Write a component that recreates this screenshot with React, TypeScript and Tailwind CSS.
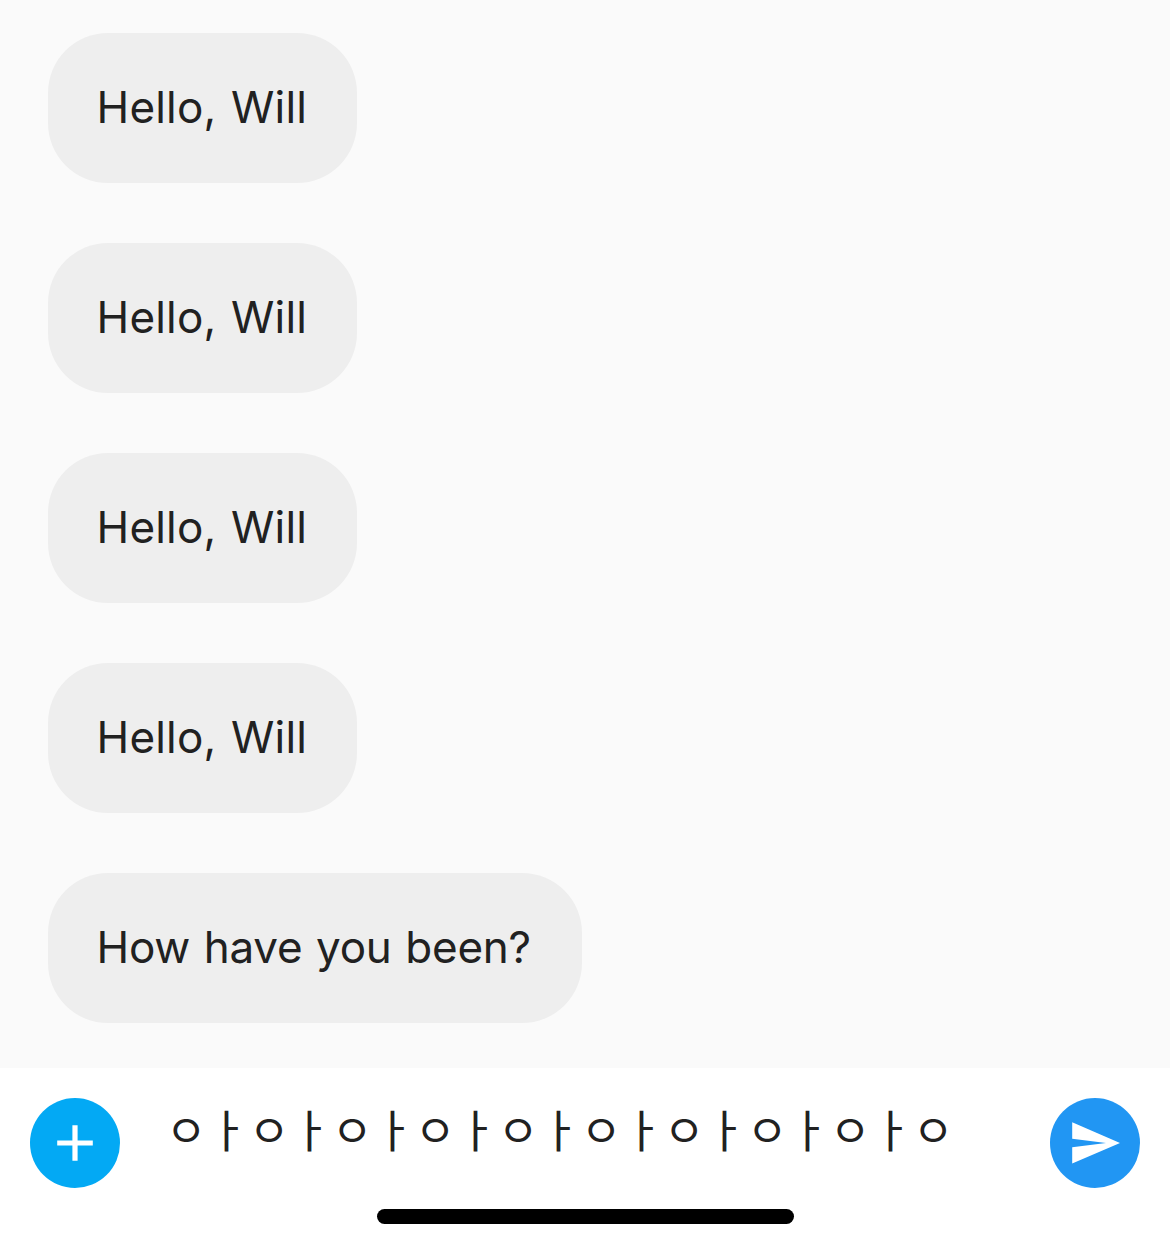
const greeting = { text: 'Hello, Will', style: 'w-[309px] tracking-[0.2px] [word-spacing:2px]' };

const messages = [
  greeting,
  greeting,
  greeting,
  greeting,
  { text: 'How have you been?', style: 'w-[534px] tracking-[-0.25px] [word-spacing:1.6px]' },
];

export default function App() {
  return (
    <div className="flex h-[1248px] w-[1170px] flex-col overflow-hidden bg-[#fafafa] font-['Inter',sans-serif] text-[#212121]">
      <main className="flex h-[1068px] shrink-0 flex-col items-start gap-[60px] px-12 pt-[33px]">
        {messages.map((m, i) => (
          <div
            key={i}
            className={`flex h-[150px] shrink-0 items-center rounded-[60px] bg-[#eeeeee] pb-0.5 pl-[48.5px] text-[44px] leading-[54px] whitespace-nowrap ${m.style}`}
          >
            {m.text}
          </div>
        ))}
      </main>
      <footer className="flex h-[180px] shrink-0 flex-col items-center bg-white">
        <div className="flex h-[141px] w-full items-start px-[30px] pt-[30px]">
          <button className="size-[90px] shrink-0 rounded-full bg-[#03a9f4]" aria-label="Add">
            <svg viewBox="0 0 90 90" className="size-[90px]" fill="white">
              <path d="M42.4 27.200h5.200v15.200h15.200v5.200H47.600v15.200h-5.200V47.600H27.200v-5.200h15.200z" />
            </svg>
          </button>
          <div className="ml-[45.5px] flex h-[62px] flex-1 items-center font-['Noto_Sans_CJK_KR',sans-serif] text-[45px] tracking-[0.1px] whitespace-nowrap">
            ㅇㅏㅇㅏㅇㅏㅇㅏㅇㅏㅇㅏㅇㅏㅇㅏㅇㅏㅇ
          </div>
          <button className="size-[90px] shrink-0 rounded-full bg-[#2196f3]" aria-label="Send">
            <svg viewBox="0 0 90 90" className="size-[90px]" fill="white">
              <path d="M22.200 24.300L70 45L22.200 65.600V49.300L56 45L22.200 40.700Z" />
            </svg>
          </button>
        </div>
        <div className="h-[15px] w-[417px] rounded-full bg-black" />
      </footer>
    </div>
  );
}
